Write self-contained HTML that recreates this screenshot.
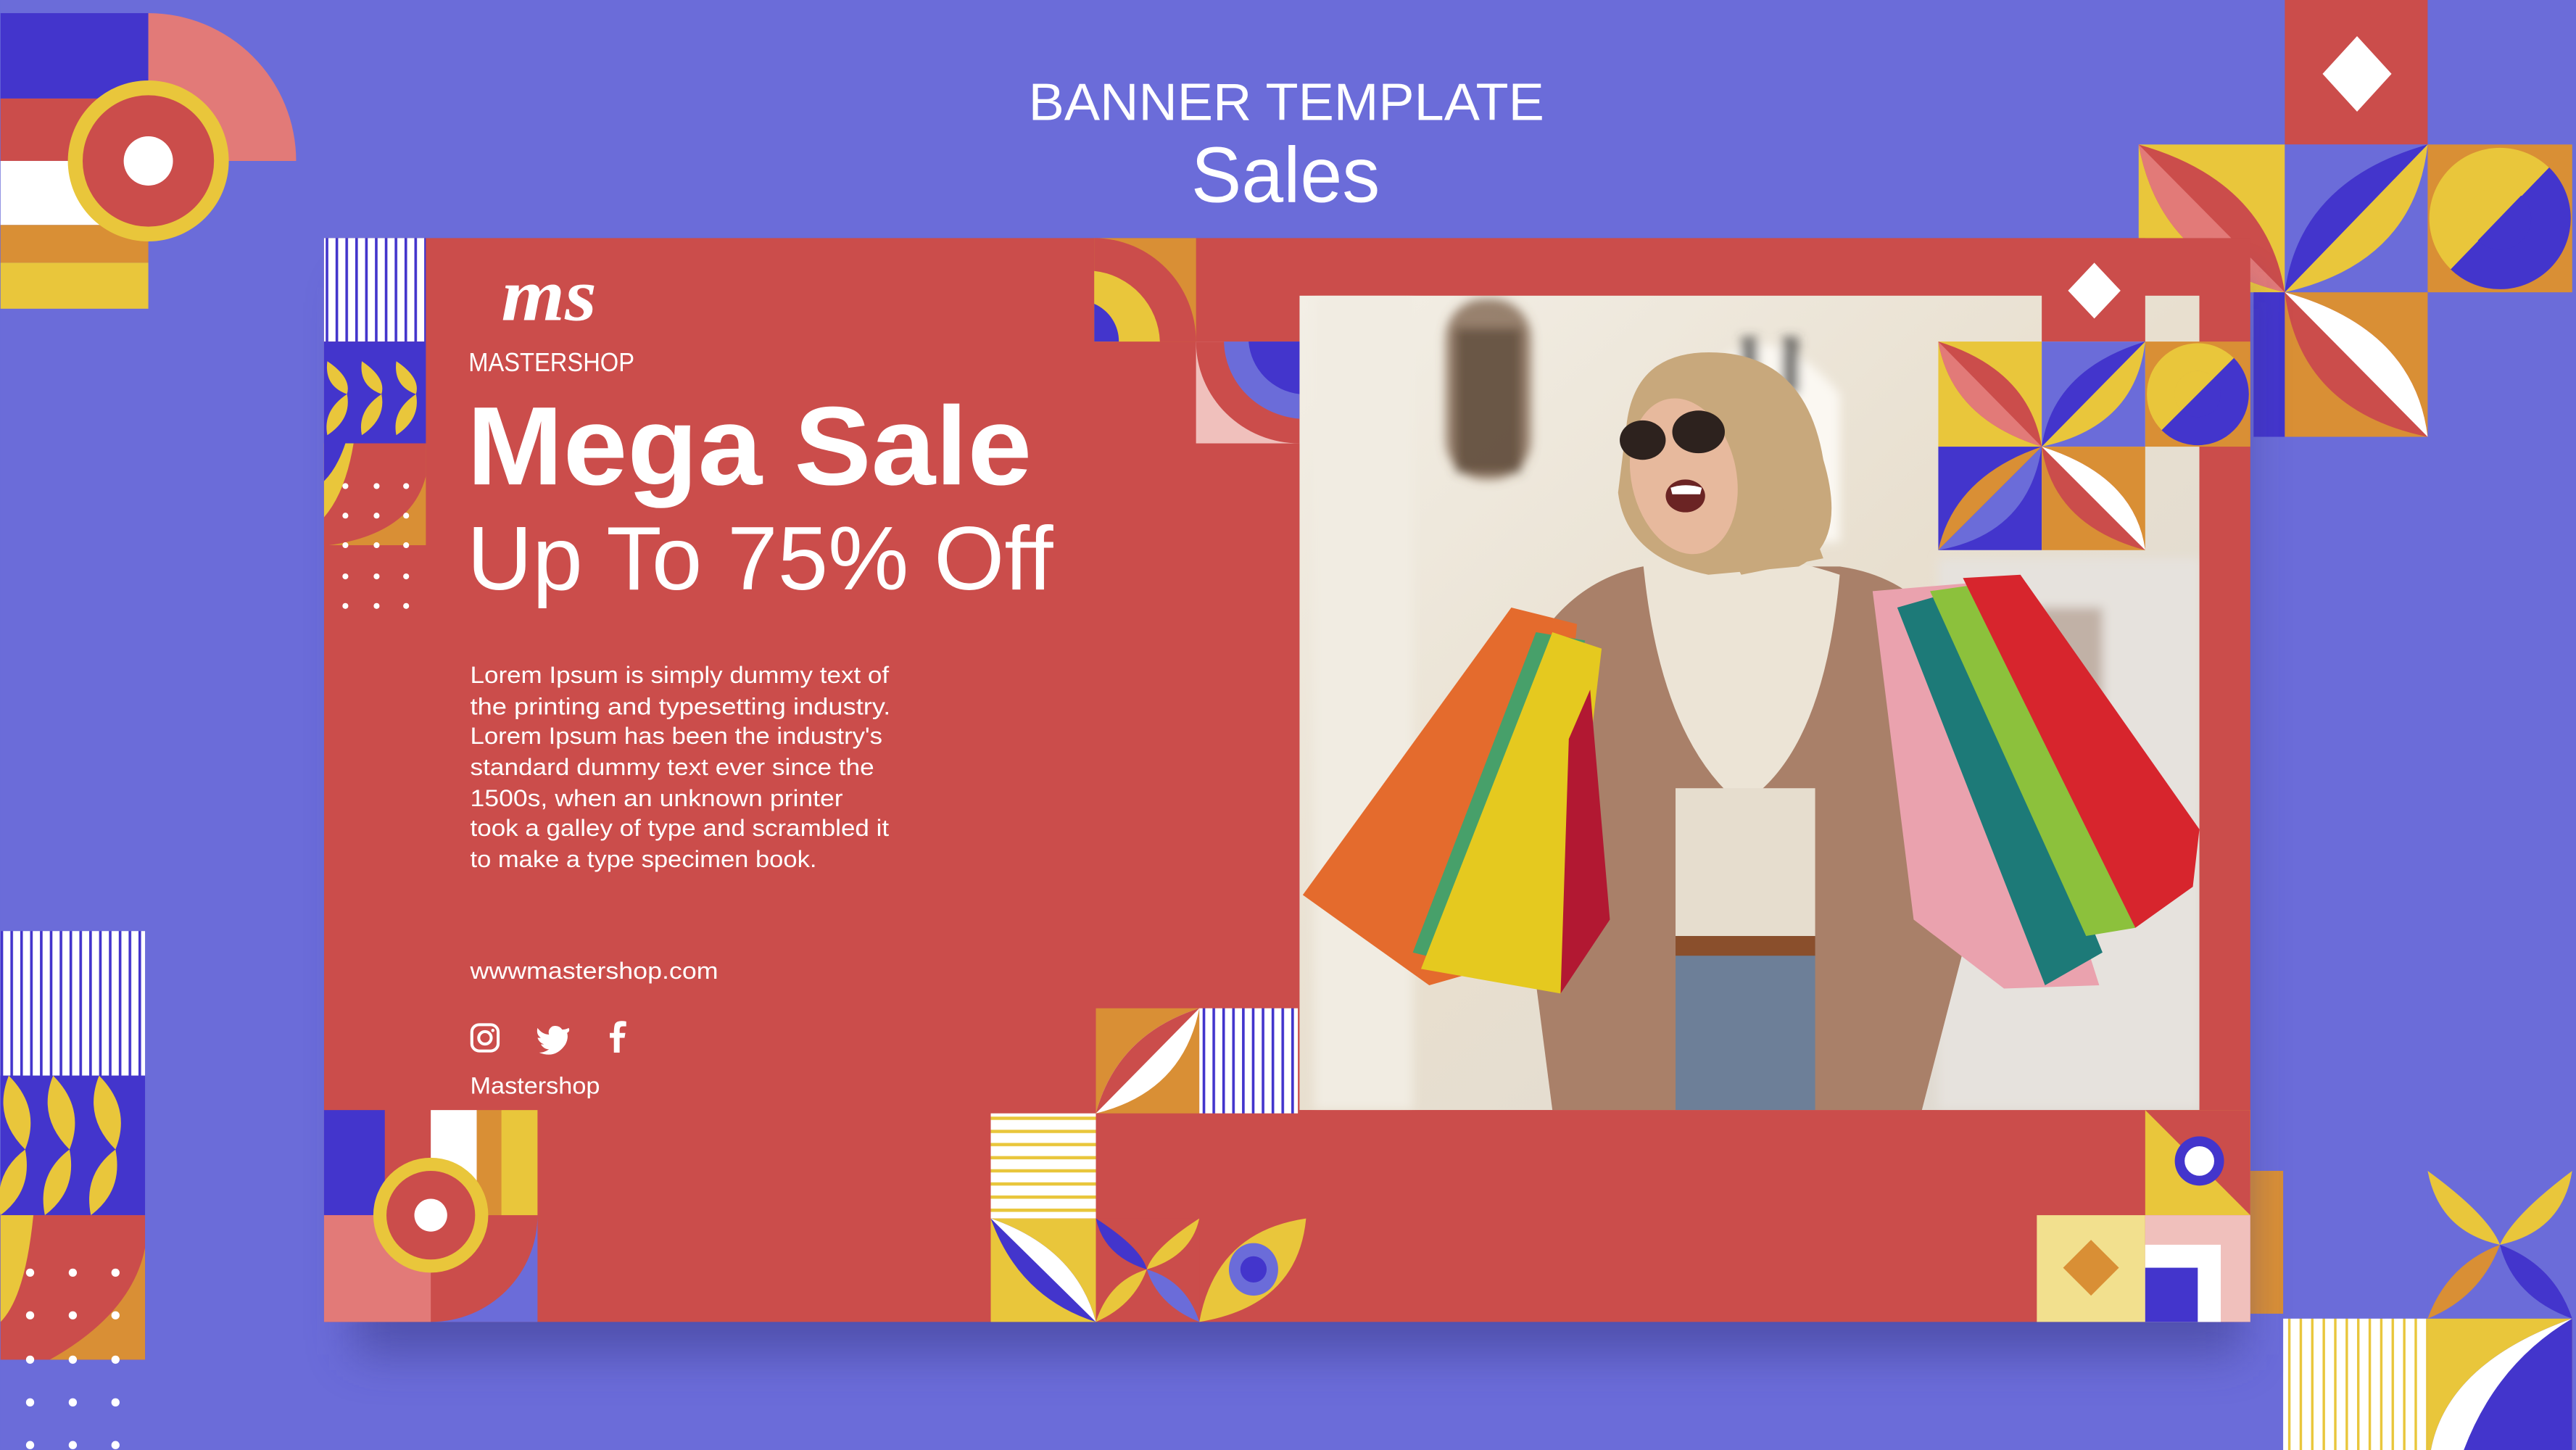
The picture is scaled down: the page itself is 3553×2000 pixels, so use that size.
<!DOCTYPE html>
<html><head><meta charset="utf-8"><style>
html,body{margin:0;padding:0;background:#6b6cd9;overflow:hidden}
svg{display:block}
text{font-family:"Liberation Sans",sans-serif;fill:#fff}
</style></head><body>
<svg width="3553" height="2000" viewBox="0 0 1568 883" xmlns="http://www.w3.org/2000/svg">
<defs>
<filter id="sh" x="-10%" y="-10%" width="120%" height="130%"><feGaussianBlur stdDeviation="14"/></filter>
<filter id="bl"><feGaussianBlur stdDeviation="3"/></filter>
<linearGradient id="bg" x1="0" y1="0" x2="1" y2="1"><stop offset="0" stop-color="#f3efe6"/><stop offset="0.5" stop-color="#e8dfcf"/><stop offset="1" stop-color="#dcd8d2"/></linearGradient>
<clipPath id="ph"><rect x="791" y="180" width="548" height="496"/></clipPath>
<pattern id="vs" width="6" height="10" patternUnits="userSpaceOnUse"><rect width="6" height="10" fill="#fff"/><rect width="1.6" height="10" fill="#4335cc"/></pattern>
<pattern id="hs" width="10" height="8" patternUnits="userSpaceOnUse"><rect width="10" height="8" fill="#fff"/><rect width="10" height="2" fill="#e9c63b"/></pattern>
<pattern id="vy" width="7" height="10" patternUnits="userSpaceOnUse"><rect width="7" height="10" fill="#fff"/><rect width="1.5" height="10" fill="#e9c63b"/></pattern>
</defs>
<rect width="1568" height="883" fill="#6b6cd9"/>

<!-- top-left deco -->
<rect x="0" y="8" width="90" height="52" fill="#4335cc"/>
<path d="M90 8 A90 90 0 0 1 180 98 L90 98Z" fill="#e27a78"/>
<rect x="0" y="60" width="90" height="38" fill="#cb4d4b"/>
<rect x="0" y="98" width="90" height="39" fill="#fff"/>
<rect x="0" y="137" width="90" height="23" fill="#d98f35"/>
<rect x="0" y="160" width="90" height="28" fill="#e9c63b"/>
<circle cx="90" cy="98" r="49" fill="#e9c63b"/><circle cx="90" cy="98" r="40" fill="#cb4d4b"/><circle cx="90" cy="98" r="15" fill="#fff"/>

<!-- left bottom deco -->
<rect x="0" y="567" width="88" height="88" fill="url(#vs)"/>
<rect x="0" y="655" width="88" height="85" fill="#4335cc"/>
<g fill="#e9c63b">
<path d="M5 655 Q25 675 15 700 Q-5 680 5 655Z"/><path d="M32 655 Q52 675 42 700 Q22 680 32 655Z"/><path d="M60 655 Q80 675 70 700 Q50 680 60 655Z"/>
<path d="M15 700 Q20 725 0 740 Q-5 715 15 700Z"/><path d="M42 700 Q47 725 27 740 Q22 715 42 700Z"/><path d="M70 700 Q75 725 55 740 Q50 715 70 700Z"/>
</g>
<rect x="0" y="740" width="88" height="88" fill="#cb4d4b"/>
<path d="M0 740 L20 740 Q15 790 0 805Z" fill="#e9c63b"/>
<path d="M88 760 L88 828 L30 828 Q80 800 88 760Z" fill="#d98f35"/>
<g fill="#fff"><circle cx="18" cy="775" r="2.5"/><circle cx="44" cy="775" r="2.5"/><circle cx="70" cy="775" r="2.5"/><circle cx="18" cy="801" r="2.5"/><circle cx="44" cy="801" r="2.5"/><circle cx="70" cy="801" r="2.5"/><circle cx="18" cy="828" r="2.5"/><circle cx="44" cy="828" r="2.5"/><circle cx="70" cy="828" r="2.5"/><circle cx="18" cy="854" r="2.5"/><circle cx="44" cy="854" r="2.5"/><circle cx="70" cy="854" r="2.5"/><circle cx="18" cy="880" r="2.5"/><circle cx="44" cy="880" r="2.5"/><circle cx="70" cy="880" r="2.5"/></g>

<!-- top right deco -->
<rect x="1391" y="0" width="87" height="88" fill="#cb4d4b"/>
<path d="M1435 22 L1456 45 L1435 68 L1414 45Z" fill="#fff"/>
<rect x="1302" y="88" width="89" height="90" fill="#e9c63b"/>
<path d="M1302 88 Q1380 110 1391 178 Q1315 160 1302 88Z" fill="#cb4d4b"/>
<path d="M1302 88 L1391 178 Q1315 160 1302 88Z" fill="#e27a78"/>
<rect x="1391" y="88" width="87" height="90" fill="#6b6cd9"/>
<path d="M1478 88 Q1400 110 1391 178 Z" fill="#4335cc"/>
<path d="M1478 88 Q1470 160 1391 178 Z" fill="#e9c63b"/>
<rect x="1478" y="88" width="88" height="90" fill="#d98f35"/>
<circle cx="1522" cy="133" r="43" fill="#e9c63b"/>
<path d="M1552 102 A43 43 0 0 1 1492 164 Z" fill="#4335cc"/>
<circle cx="1522" cy="133" r="19" fill="#4335cc"/>
<path d="M1535 119 L1508 147 A19 19 0 0 1 1535 119Z" fill="#e9c63b"/>
<rect x="1372" y="178" width="19" height="88" fill="#4335cc"/>
<rect x="1391" y="178" width="87" height="88" fill="#d98f35"/>
<path d="M1391 178 Q1470 200 1478 266 Q1400 250 1391 178Z" fill="#cb4d4b"/>
<path d="M1391 178 Q1470 200 1478 266Z" fill="#fff"/>

<!-- right bottom deco -->
<rect x="1370" y="713" width="20" height="87" fill="#d98f35"/>
<rect x="1478" y="713" width="88" height="90" fill="#6b6cd9"/>
<path d="M1478 713 Q1515 740 1522 758 Q1485 750 1478 713Z" fill="#e9c63b"/>
<path d="M1566 713 Q1530 740 1522 758 Q1560 750 1566 713Z" fill="#e9c63b"/>
<path d="M1478 803 Q1490 770 1522 758 Q1510 790 1478 803Z" fill="#d98f35"/>
<path d="M1566 803 Q1555 770 1522 758 Q1530 790 1566 803Z" fill="#4335cc"/>
<rect x="1390" y="803" width="88" height="80" fill="url(#vy)"/>
<rect x="1478" y="803" width="88" height="80" fill="#e9c63b"/>
<path d="M1566 803 Q1490 830 1480 883 L1566 883Z" fill="#4335cc"/>
<path d="M1566 803 Q1490 830 1480 883 L1500 883 Q1520 830 1566 803Z" fill="#fff"/>

<!-- card shadow -->
<rect x="215" y="175" width="1150" height="650" fill="#3b3a8a" opacity="0.55" filter="url(#sh)"/>
<rect x="197" y="145" width="1173" height="660" fill="#cb4d4b"/>

<!-- photo -->
<g clip-path="url(#ph)">
<rect x="791" y="180" width="548" height="496" fill="url(#bg)"/>
<g filter="url(#bl)">
<rect x="880" y="182" width="52" height="110" rx="24" fill="#7a5d48" opacity="0.75"/>
<rect x="886" y="200" width="40" height="88" fill="#4c3a2c" opacity="0.6"/>
<path d="M1030 240 Q1070 180 1120 240 L1120 330 L1030 330Z" fill="#fbf8f2"/>
<rect x="1060" y="205" width="10" height="35" fill="#444" opacity="0.7"/>
<rect x="1085" y="205" width="10" height="35" fill="#444" opacity="0.7"/>
<rect x="800" y="180" width="60" height="496" fill="#f1ece2"/>
<rect x="1180" y="340" width="160" height="336" fill="#e6e2dd"/>
<rect x="1240" y="370" width="40" height="100" fill="#8a6a55" opacity="0.4"/>
</g>
<!-- woman -->
<path d="M925 410 Q950 355 1000 345 L1120 345 Q1190 355 1205 440 L1200 560 L1170 676 L945 676 L930 560Z" fill="#a98069"/>
<path d="M1000 340 Q1060 330 1120 350 Q1110 460 1060 490 Q1010 450 1000 340Z" fill="#ece4d6"/>
<rect x="1020" y="480" width="85" height="90" fill="#e6ddce"/>
<rect x="1020" y="570" width="85" height="106" fill="#6d7f98"/>
<rect x="1020" y="570" width="85" height="12" fill="#8a4f2c"/>
<path d="M990 260 Q995 210 1050 215 Q1100 220 1110 280 Q1125 330 1095 345 L1040 350 Q990 340 985 300Z" fill="#c8a87c"/>
<ellipse cx="1025" cy="290" rx="32" ry="48" fill="#e7b99d" transform="rotate(-12 1025 290)"/>
<path d="M1050 330 Q1080 320 1095 300 L1110 340 L1060 350Z" fill="#c8a87c"/>
<ellipse cx="1000" cy="268" rx="14" ry="12" fill="#2d221e"/>
<ellipse cx="1034" cy="263" rx="16" ry="13" fill="#2d221e"/>
<ellipse cx="1026" cy="302" rx="12" ry="10" fill="#6b2424"/>
<path d="M1017 297 Q1026 294 1036 297 L1035 301 L1018 301Z" fill="#fff"/>
<!-- bags left -->
<path d="M920 370 L960 380 L940 580 L870 600 L793 545Z" fill="#e46b2d"/>
<path d="M935 385 L965 390 L900 590 L860 580Z" fill="#47a06a"/>
<path d="M945 385 L975 395 L950 605 L865 590Z" fill="#e5c91f"/>
<path d="M968 420 L980 560 L950 605 L955 450Z" fill="#b21832"/>
<!-- bags right -->
<path d="M1140 360 L1200 355 L1278 600 L1220 602 L1165 560Z" fill="#eaa2ae"/>
<path d="M1155 370 L1190 360 L1280 580 L1245 600Z" fill="#1d7a78"/>
<path d="M1175 360 L1210 355 L1300 565 L1270 570Z" fill="#8cc13c"/>
<path d="M1195 352 L1230 350 L1339 505 L1335 540 L1300 565Z" fill="#d7252d"/>
</g>

<!-- card left strip -->
<rect x="197" y="145" width="62" height="63" fill="url(#vs)"/>
<rect x="197" y="208" width="62" height="62" fill="#4335cc"/>
<g fill="#e9c63b">
<path d="M199 220 Q214 230 211 240 Q197 235 199 220Z"/><path d="M220 220 Q235 230 232 240 Q218 235 220 220Z"/><path d="M241 220 Q256 230 253 240 Q239 235 241 220Z"/>
<path d="M211 240 Q214 255 199 265 Q196 250 211 240Z"/><path d="M232 240 Q235 255 220 265 Q217 250 232 240Z"/><path d="M253 240 Q256 255 241 265 Q238 250 253 240Z"/>
</g>
<rect x="197" y="270" width="62" height="62" fill="#d98f35"/>
<path d="M197 270 L259 270 L259 290 Q250 325 200 332 L197 332Z" fill="#cb4d4b"/>
<path d="M197 270 L215 270 Q210 300 197 315Z" fill="#e9c63b"/>
<path d="M197 270 L210 270 Q205 285 197 293Z" fill="#4335cc"/>
<g fill="#fff"><circle cx="210" cy="296" r="1.8"/><circle cx="229" cy="296" r="1.8"/><circle cx="247" cy="296" r="1.8"/><circle cx="210" cy="314" r="1.8"/><circle cx="229" cy="314" r="1.8"/><circle cx="247" cy="314" r="1.8"/><circle cx="210" cy="332" r="1.8"/><circle cx="229" cy="332" r="1.8"/><circle cx="247" cy="332" r="1.8"/><circle cx="210" cy="351" r="1.8"/><circle cx="229" cy="351" r="1.8"/><circle cx="247" cy="351" r="1.8"/><circle cx="210" cy="369" r="1.8"/><circle cx="229" cy="369" r="1.8"/><circle cx="247" cy="369" r="1.8"/></g>

<!-- card top middle deco -->
<rect x="666" y="145" width="62" height="63" fill="#d98f35"/>
<path d="M666 145 A62 63 0 0 1 728 208 L666 208Z" fill="#cb4d4b"/>
<path d="M666 165 A45 45 0 0 1 706 208 L666 208Z" fill="#e9c63b"/>
<path d="M666 185 A25 25 0 0 1 681 208 L666 208Z" fill="#4335cc"/>
<rect x="728" y="208" width="63" height="62" fill="#f0c0bc"/>
<path d="M728 208 L791 208 L791 270 A63 62 0 0 1 728 208Z" fill="#cb4d4b"/>
<path d="M745 208 L791 208 L791 255 A50 48 0 0 1 745 208Z" fill="#6b6cd9"/>
<path d="M760 208 L791 208 L791 240 A35 35 0 0 1 760 208Z" fill="#4335cc"/>

<!-- card right grid deco -->
<rect x="1243" y="145" width="63" height="63" fill="#cb4d4b"/>
<path d="M1275 160 L1291 177 L1275 194 L1259 177Z" fill="#fff"/>
<rect x="1180" y="208" width="63" height="64" fill="#e9c63b"/>
<path d="M1180 208 Q1235 225 1243 272 Q1188 255 1180 208Z" fill="#cb4d4b"/>
<path d="M1180 208 L1243 272 Q1188 255 1180 208Z" fill="#e27a78"/>
<rect x="1243" y="208" width="63" height="64" fill="#6b6cd9"/>
<path d="M1306 208 Q1250 225 1243 272Z" fill="#4335cc"/>
<path d="M1306 208 Q1300 260 1243 272Z" fill="#e9c63b"/>
<rect x="1306" y="208" width="64" height="64" fill="#d98f35"/>
<circle cx="1338" cy="240" r="31" fill="#e9c63b"/>
<path d="M1360 218 A31 31 0 0 1 1316 262Z" fill="#4335cc"/>
<circle cx="1338" cy="240" r="14" fill="#4335cc"/>
<path d="M1348 230 L1328 250 A14 14 0 0 1 1348 230Z" fill="#e9c63b"/>
<rect x="1180" y="272" width="63" height="63" fill="#4335cc"/>
<path d="M1243 272 Q1190 290 1180 335Z" fill="#d98f35"/>
<path d="M1243 272 Q1235 325 1180 335Z" fill="#6b6cd9"/>
<rect x="1243" y="272" width="63" height="63" fill="#d98f35"/>
<path d="M1243 272 Q1300 290 1306 335 Q1250 320 1243 272Z" fill="#cb4d4b"/>
<path d="M1243 272 Q1300 290 1306 335Z" fill="#fff"/>

<!-- card bottom left deco -->
<rect x="197" y="676" width="37" height="64" fill="#4335cc"/>
<rect x="262" y="676" width="28" height="64" fill="#fff"/>
<rect x="290" y="676" width="15" height="64" fill="#d98f35"/>
<rect x="305" y="676" width="22" height="64" fill="#e9c63b"/>
<rect x="197" y="740" width="65" height="65" fill="#e27a78"/>
<path d="M262 805 A65 65 0 0 0 327 740 L327 805Z" fill="#6b6cd9"/>
<circle cx="262" cy="740" r="35" fill="#e9c63b"/><circle cx="262" cy="740" r="27" fill="#cb4d4b"/><circle cx="262" cy="740" r="10" fill="#fff"/>

<!-- card bottom middle deco -->
<rect x="667" y="614" width="63" height="64" fill="#d98f35"/>
<path d="M730 614 Q680 630 667 678 Q720 665 730 614Z" fill="#fff"/>
<path d="M730 614 Q680 630 667 678Z" fill="#cb4d4b"/>
<rect x="730" y="614" width="60" height="64" fill="url(#vs)"/>
<rect x="603" y="678" width="64" height="64" fill="url(#hs)"/>
<rect x="603" y="742" width="64" height="63" fill="#e9c63b"/>
<path d="M603 742 Q620 790 667 805 Q655 760 603 742Z" fill="#4335cc"/>
<path d="M603 742 Q655 760 667 805Z" fill="#fff"/>
<rect x="667" y="742" width="63" height="63" fill="#cb4d4b"/>
<path d="M667 742 Q695 760 698 773 Q672 765 667 742Z" fill="#4335cc"/>
<path d="M730 742 Q702 760 698 773 Q725 765 730 742Z" fill="#e9c63b"/>
<path d="M667 805 Q675 780 698 773 Q690 795 667 805Z" fill="#e9c63b"/>
<path d="M730 805 Q722 780 698 773 Q705 795 730 805Z" fill="#6b6cd9"/>
<path d="M730 805 Q740 750 795 742 Q790 795 730 805Z" fill="#e9c63b"/>
<ellipse cx="763" cy="773" rx="15" ry="16" fill="#6b6cd9"/><circle cx="763" cy="773" r="8" fill="#4335cc"/>

<!-- card bottom right deco -->
<rect x="1306" y="676" width="64" height="64" fill="#e9c63b"/>
<path d="M1306 676 L1370 676 L1370 740Z" fill="#cb4d4b"/>
<circle cx="1339" cy="707" r="15" fill="#4335cc"/><circle cx="1339" cy="707" r="9" fill="#fff"/>
<rect x="1240" y="740" width="66" height="65" fill="#f2e08e"/>
<path d="M1273 755 L1290 772 L1273 789 L1256 772Z" fill="#d98f35"/>
<rect x="1306" y="740" width="64" height="65" fill="#f0c0bc"/>
<rect x="1306" y="758" width="46" height="47" fill="#fff"/>
<rect x="1306" y="772" width="32" height="33" fill="#4335cc"/>

<!-- header text -->
<text x="626" y="73" font-size="32" textLength="314" lengthAdjust="spacingAndGlyphs">BANNER  TEMPLATE</text>
<text x="725" y="123" font-size="48" textLength="115" lengthAdjust="spacingAndGlyphs">Sales</text>

<!-- logo -->
<text x="305" y="195" font-size="46" font-style="italic" font-weight="bold" style="font-family:'Liberation Serif',serif" textLength="58" lengthAdjust="spacingAndGlyphs">ms</text>
<text x="285" y="226" font-size="16" textLength="101" lengthAdjust="spacingAndGlyphs">MASTERSHOP</text>
<text x="284" y="295" font-size="68" font-weight="bold" textLength="344" lengthAdjust="spacingAndGlyphs">Mega Sale</text>
<text x="284" y="359" font-size="55" textLength="357" lengthAdjust="spacingAndGlyphs">Up To 75% Off</text>

<g font-size="14.5">
<text x="286" y="416" textLength="255" lengthAdjust="spacingAndGlyphs">Lorem Ipsum is simply dummy text of</text>
<text x="286" y="435" textLength="256" lengthAdjust="spacingAndGlyphs">the printing and typesetting industry.</text>
<text x="286" y="453" textLength="251" lengthAdjust="spacingAndGlyphs">Lorem Ipsum has been the industry's</text>
<text x="286" y="472" textLength="246" lengthAdjust="spacingAndGlyphs">standard dummy text ever since the</text>
<text x="286" y="491" textLength="227" lengthAdjust="spacingAndGlyphs">1500s, when an unknown printer</text>
<text x="286" y="509" textLength="255" lengthAdjust="spacingAndGlyphs">took a galley of type and scrambled it</text>
<text x="286" y="528" textLength="211" lengthAdjust="spacingAndGlyphs">to make a type specimen book.</text>
<text x="286" y="596" textLength="151" lengthAdjust="spacingAndGlyphs">wwwmastershop.com</text>
<text x="286" y="666" textLength="79" lengthAdjust="spacingAndGlyphs">Mastershop</text>
</g>
<!-- social icons -->
<rect x="287" y="624" width="16" height="16" rx="4.5" fill="none" stroke="#fff" stroke-width="1.8"/>
<circle cx="295" cy="632" r="3.8" fill="none" stroke="#fff" stroke-width="1.8"/>
<circle cx="299.8" cy="627.5" r="1" fill="#fff"/>
<path d="M346 626 Q344 627 342 627 Q340 624 336 625 Q333 627 334 630 Q330 630 327 626 Q326 630 329 632 L327 632 Q328 635 331 636 L329 636 Q331 639 334 639 Q331 641 328 641 Q338 645 344 636 Q346 632 345 629 Q347 628 346 626Z" fill="#fff"/>
<path d="M377 641 L377 632 L380 632 L380.5 629 L377 629 L377 627 Q377 625 379 625 L381 625 L381 622 Q375 621 374 624 Q373.5 626 373.5 629 L371 629 L371 632 L373.5 632 L373.5 641Z" fill="#fff"/>
</svg>
</body></html>
